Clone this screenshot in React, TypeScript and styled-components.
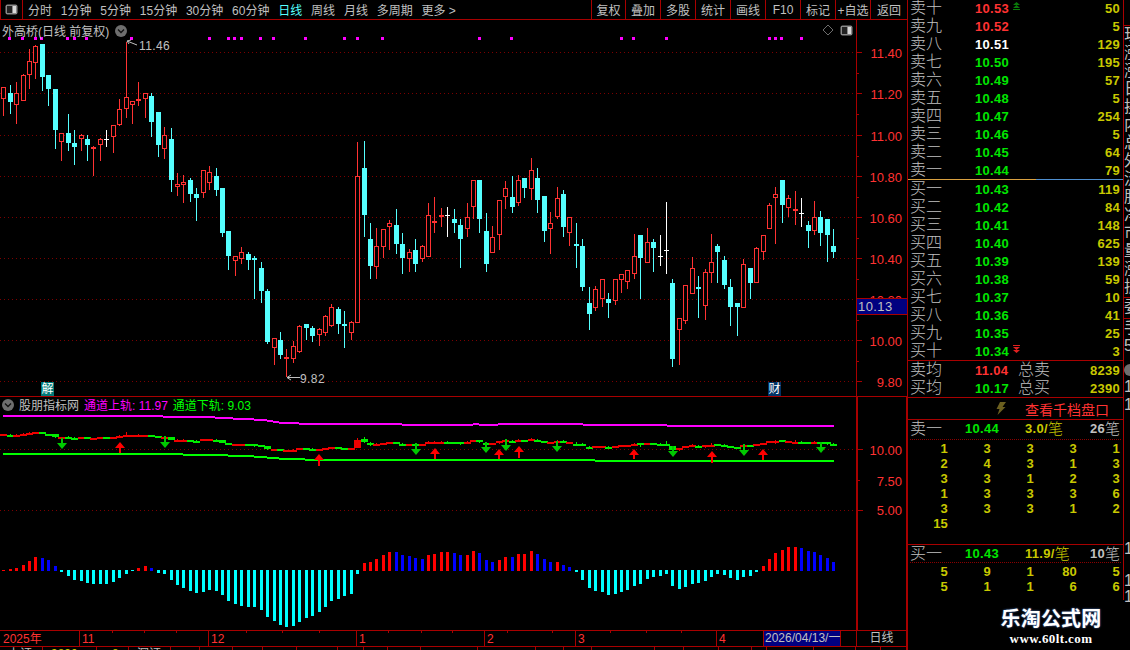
import React from 'react';
import styled, { createGlobalStyle } from 'styled-components';

const RED_LINE = '#a80000';
const GRID_DOT = '#7c0000';
const GRAY = '#c0c0c0';
const FONT = '"Liberation Sans", "Noto Sans CJK SC", sans-serif';

const GlobalStyle = createGlobalStyle`
  html, body {
    margin: 0;
    padding: 0;
    background: #000;
  }
`;

const Page = styled.div`
  display: flex;
  width: 1130px;
  height: 650px;
  overflow: hidden;
  background: #000;
  color: ${GRAY};
  font-family: ${FONT};
  font-size: 12px;
`;

const LeftPane = styled.div`
  display: flex;
  flex-direction: column;
  width: 907px;
  flex: none;
`;

/* toolbar */
const Toolbar = styled.div`
  display: flex;
  align-items: stretch;
  height: 19px;
  flex: none;
  border-bottom: 1px solid ${RED_LINE};
`;

const LayoutCell = styled.div`
  display: flex;
  align-items: center;
  justify-content: center;
  width: 23px;
  flex: none;
  border-left: 1px solid ${RED_LINE};
  border-right: 1px solid ${RED_LINE};
  box-sizing: border-box;
`;

const PeriodList = styled.div`
  display: flex;
  align-items: center;
  gap: 8.8px;
  padding-left: 5px;
  flex: 1;
`;

const Period = styled.span<{ $active?: boolean }>`
  color: ${p => (p.$active ? '#55ffff' : GRAY)};
  white-space: nowrap;
`;

const ToolButton = styled.div<{ $w: number }>`
  display: flex;
  align-items: center;
  justify-content: center;
  width: ${p => p.$w}px;
  flex: none;
  box-sizing: border-box;
  border-left: 1px solid ${RED_LINE};
  white-space: nowrap;
`;

/* chart rows */
const ChartRow = styled.div<{ $h: number }>`
  display: flex;
  height: ${p => p.$h}px;
  flex: none;
  border-bottom: 1px solid ${RED_LINE};
`;

const ChartArea = styled.div`
  position: relative;
  width: 856px;
  flex: none;
`;

const ChartSvg = styled.svg`
  display: block;
  width: 856px;
  height: 100%;
  font-family: ${FONT};
`;

const ChartTitle = styled.div`
  position: absolute;
  left: 2px;
  top: 2px;
  display: flex;
  align-items: center;
  gap: 6px;
  white-space: nowrap;
`;

const IndicatorTitle = styled.div`
  position: absolute;
  left: 2px;
  top: 0;
  height: 15px;
  display: flex;
  align-items: center;
  gap: 5px;
  white-space: nowrap;
`;

const Legend = styled.span<{ $color: string }>`
  color: ${p => p.$color};
`;

const Collapse = styled.span`
  display: inline-flex;
  align-items: center;
  justify-content: center;
  width: 12px;
  height: 12px;
  flex: none;
  border-radius: 50%;
  background: #6e6e6e;
`;

const CornerTools = styled.div`
  position: absolute;
  right: 3px;
  top: 4px;
  display: flex;
  align-items: center;
  gap: 6px;
`;

const EventBadge = styled.span<{ $left: number; $bg: string }>`
  position: absolute;
  left: ${p => p.$left}px;
  top: 362px;
  width: 13px;
  height: 14px;
  background: ${p => p.$bg};
  color: #fff;
  font-size: 12px;
  line-height: 14px;
  text-align: center;
`;

const AxisColumn = styled.div<{ $heavy?: boolean }>`
  position: relative;
  width: 51px;
  flex: none;
  box-sizing: border-box;
  border-left: ${p => (p.$heavy ? 2 : 1)}px solid ${RED_LINE};
  border-right: ${p => (p.$heavy ? 1 : 0)}px solid ${RED_LINE};
`;

const AxisSvg = styled.svg`
  display: block;
  width: 100%;
  height: 100%;
  font-family: ${FONT};
`;

const LastPriceTag = styled.div`
  position: absolute;
  left: 0;
  top: 278px;
  width: 100%;
  height: 17px;
  box-sizing: border-box;
  background: #000080;
  border-top: 1px solid ${RED_LINE};
  border-bottom: 1px solid ${RED_LINE};
  color: ${GRAY};
  font-size: 13px;
  line-height: 15px;
  letter-spacing: 0.4px;
  padding-left: 1px;
`;

/* date row */
const DateRow = styled.div`
  display: flex;
  height: 15px;
  flex: none;
  border-bottom: 1px solid ${RED_LINE};
`;

const DateTrack = styled.div`
  position: relative;
  width: 856px;
  flex: none;
`;

const YearMark = styled.span`
  position: absolute;
  left: 3px;
  top: 0;
  color: #ff3232;
  line-height: 16px;
  white-space: nowrap;
`;

const DateMark = styled.span<{ $left: number }>`
  position: absolute;
  left: ${p => p.$left}px;
  top: 0;
  height: 15px;
  padding-left: 2px;
  border-left: 1px solid ${RED_LINE};
  color: #ff3232;
  line-height: 16px;
  white-space: nowrap;
`;

const MinorTick = styled.i<{ $left: number }>`
  position: absolute;
  left: ${p => p.$left}px;
  top: 0;
  width: 1px;
  height: 2px;
  background: ${RED_LINE};
`;

const CursorDate = styled.span`
  position: absolute;
  left: 763px;
  top: 0;
  width: 78px;
  height: 15px;
  box-sizing: border-box;
  border-left: 1px solid ${RED_LINE};
  border-right: 1px solid ${RED_LINE};
  background: #000080;
  color: ${GRAY};
  line-height: 15px;
  padding-left: 1px;
  white-space: nowrap;
`;

const PeriodCell = styled.div`
  width: 51px;
  flex: none;
  box-sizing: border-box;
  border-left: 1px solid ${RED_LINE};
  border-right: 1px solid ${RED_LINE};
  text-align: center;
  line-height: 15px;
`;

/* status strip */
const StatusStrip = styled.div`
  display: flex;
  flex: 1;
  overflow: hidden;
`;

const StatusCell = styled.div<{ $w: number; $color?: string }>`
  width: ${p => p.$w}px;
  flex: none;
  box-sizing: border-box;
  border-right: 1px solid ${RED_LINE};
  color: ${p => p.$color ?? GRAY};
  line-height: 14px;
  padding-left: 8px;
  white-space: nowrap;
  overflow: hidden;
`;

/* order book */
const OrderPanel = styled.div`
  display: flex;
  flex-direction: column;
  width: 217px;
  flex: none;
  border-left: 1px solid ${RED_LINE};
  box-sizing: border-box;
`;

const BookBox = styled.div`
  height: 601px;
  flex: none;
  border-right: 1px solid ${RED_LINE};
  margin-top: -1px;
  display: flex;
  flex-direction: column;
`;

const LevelRow = styled.div`
  position: relative;
  display: flex;
  align-items: center;
  height: 18px;
  flex: none;
  padding: 0 3px 0 2px;
`;

const LevelName = styled.span`
  width: 65px;
  flex: none;
  font-size: 16px;
  line-height: 18px;
  color: ${GRAY};
  font-weight: 300;
`;

const Num = styled.span<{ $color: string; $w?: number; $right?: boolean }>`
  ${p => (p.$w ? `width: ${p.$w}px; flex: none;` : '')}
  ${p => (p.$right ? 'margin-left: auto; text-align: right;' : '')}
  color: ${p => p.$color};
  font-size: 13px;
  font-weight: 700;
  letter-spacing: 0.3px;
  white-space: nowrap;
`;

const Flag = styled.svg`
  position: absolute;
  left: 105px;
  top: 3px;
  width: 7px;
  height: 8px;
`;

const SpreadLine = styled.div`
  height: 1px;
  flex: none;
  background: linear-gradient(to right, #d8a040 0, #d8a040 128px, #4f8fd0 128px, #4f8fd0 100%);
`;

const Divider = styled.div`
  height: 1px;
  flex: none;
  background: ${RED_LINE};
`;

const DeepLink = styled.div`
  display: flex;
  align-items: center;
  height: 21px;
  flex: none;
  padding-left: 87px;
  gap: 19px;
  color: #ff3232;
  font-size: 14px;
`;

const QueueHead = styled.div`
  display: flex;
  align-items: center;
  height: 17px;
  flex: none;
  padding-left: 2px;
`;

const QueueName = styled(LevelName)`
  width: 55px;
`;

const Pen = styled.span<{ $color: string; $end?: boolean }>`
  color: ${p => p.$color};
  font-size: 15px;
  line-height: 17px;
  font-weight: 300;
  margin-right: ${p => (p.$end ? 3 : 0)}px;
`;

const QueueRule = styled.div<{ $top: number }>`
  height: 0;
  flex: none;
  margin: ${p => p.$top}px 2px 1px;
  border-top: 1px dotted #8a0000;
`;

const QueueGrid = styled.div<{ $h: number }>`
  display: grid;
  grid-template-columns: repeat(5, 43px);
  grid-auto-rows: 15px;
  height: ${p => p.$h}px;
  flex: none;
  margin-left: -3px;
  align-items: center;
`;

const QueueCell = styled.span`
  text-align: right;
  color: #c8c800;
  font-size: 13px;
  font-weight: 700;
  line-height: 15px;
  letter-spacing: 0.2px;
`;

const Watermark = styled.div`
  flex: 1;
  display: flex;
  flex-direction: column;
  align-items: center;
  padding: 8px 0 0 70px;
`;

const WatermarkTitle = styled.span`
  color: #fff;
  font-size: 20px;
  font-weight: 700;
  line-height: 22px;
  letter-spacing: 0.2px;
  white-space: nowrap;
  text-shadow: 0 0 2px #4f7fd0;
`;

const WatermarkUrl = styled.span`
  color: #fff;
  font-family: "Liberation Serif", serif;
  font-size: 13px;
  font-weight: 700;
  line-height: 16px;
  letter-spacing: 0.4px;
  white-space: nowrap;
  margin-top: 1px;
`;

/* clipped neighbour panel */
const SideStrip = styled.div`
  width: 6px;
  flex: none;
  overflow: hidden;
  display: flex;
  flex-direction: column;
  padding-top: 25px;
  box-sizing: border-box;
`;

const SideRow = styled.div<{ $rule?: boolean; $top?: number }>`
  width: 30px;
  height: 18px;
  flex: none;
  font-size: 16px;
  line-height: 18px;
  color: ${GRAY};
  margin-top: ${p => p.$top ?? 0}px;
  ${p => (p.$rule ? `border-top: 1px solid ${RED_LINE};` : '')}
`;

const SideDot = styled.span`
  display: block;
  width: 12px;
  height: 12px;
  margin-top: 9px;
  flex: none;
  border-radius: 50%;
  background: #6e6e6e;
`;

/* data, all y values in page pixels: [kind, bodyTop, bodyBottom, high, low] */
type Kind = 'r' | 'c' | 'w';
type Candle = [Kind, number, number, number, number];

const candles: Candle[] = [
  ['r', 87, 99, 87, 116], ['c', 93, 102, 85, 114], ['r', 93, 105, 82, 124], ['r', 75, 101, 74, 101],
  ['r', 61, 75, 49, 89], ['r', 46, 63, 45, 79], ['c', 44, 77, 44, 91], ['c', 75, 89, 75, 106],
  ['c', 89, 130, 89, 149], ['r', 133, 142, 133, 161], ['c', 133, 143, 114, 151], ['c', 143, 147, 130, 165],
  ['r', 135, 139, 134, 151], ['c', 139, 145, 135, 161], ['r', 147, 149, 146, 176], ['r', 139, 145, 138, 161],
  ['w', 139, 139, 130, 147], ['r', 125, 137, 125, 153], ['r', 109, 125, 99, 126], ['r', 97, 109, 42, 118],
  ['r', 101, 105, 101, 124], ['r', 99, 101, 82, 106], ['r', 93, 99, 93, 118], ['c', 96, 122, 93, 137],
  ['c', 112, 145, 112, 157], ['r', 135, 149, 127, 159], ['c', 139, 180, 128, 192], ['r', 184, 187, 173, 196],
  ['r', 182, 185, 175, 203], ['c', 180, 194, 178, 202], ['c', 194, 198, 188, 221], ['r', 170, 193, 170, 198],
  ['r', 172, 183, 166, 190], ['c', 176, 190, 168, 196], ['c', 188, 233, 188, 237], ['c', 231, 256, 231, 270],
  ['r', 256, 261, 256, 276], ['r', 252, 259, 247, 264], ['c', 254, 260, 252, 270], ['c', 258, 260, 256, 299],
  ['c', 268, 291, 262, 303], ['c', 291, 342, 289, 344], ['r', 338, 348, 338, 365], ['c', 340, 355, 332, 359],
  ['r', 357, 359, 349, 377], ['r', 346, 359, 341, 363], ['r', 326, 352, 325, 353], ['c', 324, 328, 324, 340],
  ['c', 328, 336, 326, 342], ['r', 329, 335, 328, 346], ['r', 316, 333, 315, 336], ['r', 307, 326, 304, 327],
  ['c', 309, 324, 307, 334], ['c', 324, 326, 311, 348], ['r', 322, 333, 321, 340], ['r', 176, 323, 142, 323],
  ['c', 168, 215, 141, 237], ['c', 239, 266, 223, 279], ['r', 246, 267, 228, 279], ['r', 229, 247, 229, 258],
  ['r', 223, 227, 220, 250], ['c', 225, 244, 209, 254], ['c', 244, 258, 233, 274], ['r', 252, 259, 249, 272],
  ['c', 250, 264, 239, 272], ['r', 246, 259, 245, 262], ['r', 215, 257, 203, 257], ['r', 221, 223, 197, 233],
  ['r', 215, 217, 208, 227], ['w', 215, 215, 207, 237], ['c', 219, 223, 209, 233], ['c', 225, 239, 219, 268],
  ['r', 217, 229, 203, 237], ['r', 180, 207, 180, 219], ['c', 180, 219, 180, 233], ['c', 231, 264, 213, 272],
  ['r', 237, 253, 226, 253], ['r', 200, 235, 200, 250], ['r', 188, 197, 181, 209], ['c', 197, 207, 176, 213],
  ['r', 180, 203, 175, 206], ['c', 178, 188, 178, 198], ['r', 170, 189, 158, 200], ['c', 178, 200, 168, 213],
  ['c', 196, 231, 196, 242], ['r', 223, 229, 212, 254], ['r', 198, 217, 187, 219], ['c', 194, 227, 190, 237],
  ['r', 217, 233, 217, 246], ['c', 244, 246, 223, 268], ['c', 246, 287, 239, 291], ['c', 303, 314, 287, 330],
  ['r', 289, 308, 286, 311], ['r', 279, 299, 279, 307], ['c', 299, 303, 293, 318], ['r', 279, 301, 279, 305],
  ['r', 274, 280, 274, 293], ['r', 270, 282, 270, 289], ['r', 256, 274, 234, 279], ['c', 235, 258, 235, 299],
  ['r', 242, 263, 228, 263], ['c', 242, 248, 239, 272], ['w', 256, 256, 235, 266], ['w', 250, 250, 202, 274],
  ['c', 283, 359, 279, 367], ['r', 318, 330, 318, 365], ['r', 285, 321, 285, 324], ['r', 268, 294, 257, 294],
  ['c', 287, 289, 276, 318], ['r', 272, 306, 269, 320], ['r', 262, 273, 234, 283], ['c', 246, 252, 244, 283],
  ['c', 260, 285, 256, 289], ['c', 287, 307, 279, 326], ['c', 303, 307, 303, 336], ['r', 264, 308, 259, 308],
  ['c', 268, 283, 268, 299], ['r', 248, 283, 247, 283], ['r', 235, 252, 235, 260], ['r', 205, 229, 203, 229],
  ['r', 194, 198, 187, 244], ['c', 180, 205, 180, 223], ['r', 198, 208, 195, 217], ['r', 209, 211, 191, 225],
  ['w', 213, 213, 198, 227], ['c', 225, 231, 221, 248], ['r', 217, 231, 201, 235], ['c', 217, 233, 211, 246],
  ['c', 219, 235, 219, 262], ['c', 246, 252, 229, 258],
];

const candleX = (i: number) => Math.round(3.3 + i * 6.434);
const miniY = (y: number) => 449.3 - (340.3 - y) * 0.0594;

const priceLevels = [52, 93, 135, 176, 217, 258, 299, 340, 381];
const priceLabels = ['11.40', '11.20', '11.00', '10.80', '10.60', '10.40', '10.20', '10.00', '9.80'];
const minorLevels = [73, 114, 156, 197, 238, 279, 320, 361];

const signalX = [8, 21, 34, 40, 66, 73, 85, 130, 208, 227, 233, 240, 259, 272, 304, 343, 356, 381, 478, 510, 620, 632, 665, 768, 774, 780, 800];

const upperSteps: [number, number, number][] = [
  [3, 163, 416], [163, 215, 417], [215, 233, 418], [233, 254, 419], [254, 267, 420], [267, 273, 421],
  [273, 279, 422], [279, 299, 423], [299, 402, 424], [402, 473, 425], [473, 479, 424], [479, 498, 425],
  [498, 583, 424], [583, 667, 425], [667, 834, 426],
];

const lowerSteps: [number, number, number][] = [
  [3, 183, 454], [183, 228, 455], [228, 254, 456], [254, 267, 457], [267, 279, 458], [279, 305, 459],
  [305, 595, 460], [595, 834, 461],
];

// [x, top, tip]
const downArrows = [
  [62, 438, 449], [165, 436, 448], [416, 443, 455], [486, 442, 453], [506, 439, 451], [557, 441, 452],
  [673, 446, 457], [744, 444, 456], [821, 442, 453],
];
// [x, tip, bottom]
const upArrows = [
  [120, 442, 453], [319, 454, 466], [435, 448, 459], [499, 449, 459], [519, 446, 458], [634, 449, 459],
  [712, 451, 463], [763, 449, 460],
];

// z values are 3x crop coordinates of bar ends
const macd: ['r' | 'b' | 'c', number][] = [
  ['r', 90], ['r', 87], ['r', 84], ['r', 75], ['r', 63], ['r', 51], ['b', 54], ['b', 60], ['b', 78], ['c', 95],
  ['c', 108], ['c', 120], ['c', 123], ['c', 129], ['c', 132], ['c', 132], ['c', 132], ['c', 126], ['c', 114], ['c', 102],
  ['c', 93], ['r', 84], ['r', 78], ['b', 84], ['c', 99], ['c', 102], ['c', 120], ['c', 135], ['c', 144], ['c', 153],
  ['c', 159], ['c', 156], ['c', 150], ['c', 153], ['c', 165], ['c', 183], ['c', 192], ['c', 198], ['c', 201], ['c', 201],
  ['c', 210], ['c', 231], ['c', 243], ['c', 255], ['c', 261], ['c', 258], ['c', 246], ['c', 234], ['c', 228], ['c', 216],
  ['c', 201], ['c', 183], ['c', 177], ['c', 168], ['c', 162], ['c', 102], ['r', 69], ['r', 66], ['r', 57], ['r', 45],
  ['r', 36], ['b', 36], ['b', 45], ['b', 48], ['b', 54], ['b', 57], ['r', 45], ['r', 42], ['r', 36], ['r', 36],
  ['b', 39], ['b', 45], ['r', 45], ['r', 33], ['b', 39], ['b', 60], ['b', 66], ['r', 60], ['r', 51], ['b', 51],
  ['r', 42], ['r', 42], ['r', 33], ['b', 42], ['b', 57], ['b', 66], ['r', 66], ['b', 75], ['b', 81], ['c', 95],
  ['c', 120], ['c', 144], ['c', 153], ['c', 156], ['c', 165], ['c', 162], ['c', 156], ['c', 150], ['c', 138], ['c', 132],
  ['c', 117], ['c', 111], ['c', 108], ['c', 102], ['c', 138], ['c', 147], ['c', 141], ['c', 132], ['c', 129], ['c', 123],
  ['c', 111], ['c', 102], ['c', 105], ['c', 114], ['c', 120], ['c', 111], ['c', 108], ['c', 96], ['r', 78], ['r', 57],
  ['r', 39], ['r', 30], ['r', 21], ['r', 21], ['b', 24], ['b', 33], ['b', 36], ['b', 45], ['b', 54], ['b', 66],
];

const macdColors = { r: '#ff0000', b: '#0000ff', c: '#00ffff' };

const periods = ['分时', '1分钟', '5分钟', '15分钟', '30分钟', '60分钟', '日线', '周线', '月线', '多周期', '更多 >'];
const tools: [string, number][] = [
  ['复权', 34], ['叠加', 35], ['多股', 35], ['统计', 35], ['画线', 35], ['F10', 35], ['标记', 35], ['+自选', 35], ['返回', 37],
];

const asks: [string, string, string, string][] = [
  ['卖十', '10.53', '#ff3232', '50'], ['卖九', '10.52', '#ff3232', '5'], ['卖八', '10.51', '#ffffff', '129'],
  ['卖七', '10.50', '#00e600', '195'], ['卖六', '10.49', '#00e600', '57'], ['卖五', '10.48', '#00e600', '5'],
  ['卖四', '10.47', '#00e600', '254'], ['卖三', '10.46', '#00e600', '5'], ['卖二', '10.45', '#00e600', '64'],
  ['卖一', '10.44', '#00e600', '79'],
];
const bids: [string, string, string, string][] = [
  ['买一', '10.43', '#00e600', '119'], ['买二', '10.42', '#00e600', '84'], ['买三', '10.41', '#00e600', '148'],
  ['买四', '10.40', '#00e600', '625'], ['买五', '10.39', '#00e600', '139'], ['买六', '10.38', '#00e600', '59'],
  ['买七', '10.37', '#00e600', '10'], ['买八', '10.36', '#00e600', '41'], ['买九', '10.35', '#00e600', '25'],
  ['买十', '10.34', '#00e600', '3'],
];

const askQueue = ['1', '3', '3', '3', '1', '2', '4', '3', '1', '3', '3', '3', '1', '2', '3', '1', '3', '3', '3', '6', '3', '3', '3', '1', '2', '15'];
const bidQueue = ['5', '9', '1', '80', '5', '5', '1', '1', '6', '6'];

const sideChars = ['现', '涨', '涨', '日', '换', '内', '总', '外', '流', '股', '净', '市', '量', '涨', '振'];

const statusCells: [number, string, string?][] = [
  [43, '上证'], [54, '3890', '#c8c800'], [32, '+8', '#c8c800'], [42, '深证'], [29, ''], [33, ''], [30, ''], [34, ''],
  [41, ''], [26, ''], [24, ''], [33, ''], [57, ''], [58, ''], [28, ''], [28, ''], [63, ''], [29, ''], [35, ''], [33, ''],
  [15, ''], [47, ''], [42, ''], [25, ''], [26, ''],
];

const ChevronDown = () => (
  <svg width="8" height="6" viewBox="0 0 8 6">
    <path d="M1 1.5 L4 4.5 L7 1.5" fill="none" stroke="#111" strokeWidth="1.3" />
  </svg>
);

const PaneToggle = () => (
  <svg width="13" height="11" viewBox="0 0 13 11">
    <rect x="0.5" y="0.5" width="12" height="10" rx="2" fill="#8a8a8a" />
    <rect x="2" y="2" width="5" height="7" fill="#222" />
    <rect x="8" y="2" width="3" height="7" fill="#d8d8d8" />
  </svg>
);

const CandleMark = ({ c, i }: { c: Candle; i: number }) => {
  const [kind, top, bottom, high, low] = c;
  const x = candleX(i);
  if (kind === 'w') {
    return (
      <g stroke="#fff" shapeRendering="crispEdges">
        <line x1={x + 0.5} x2={x + 0.5} y1={high} y2={low} />
        <line x1={x - 2} x2={x + 3} y1={top + 0.5} y2={top + 0.5} />
      </g>
    );
  }
  if (kind === 'c') {
    return (
      <g shapeRendering="crispEdges">
        <line x1={x + 0.5} x2={x + 0.5} y1={high} y2={low} stroke="#55ffff" />
        <rect x={x - 2} y={top} width={5} height={Math.max(bottom - top, 2)} fill="#55ffff" />
      </g>
    );
  }
  return (
    <g shapeRendering="crispEdges" stroke="#ff3232">
      <line x1={x + 0.5} x2={x + 0.5} y1={high} y2={top} />
      <line x1={x + 0.5} x2={x + 0.5} y1={bottom} y2={low} />
      <rect x={x - 1.5} y={top + 0.5} width={4} height={Math.max(bottom - top - 1, 1)} fill="#000" />
    </g>
  );
};

const MiniCandle = ({ c, i }: { c: Candle; i: number }) => {
  const [kind, top, bottom, high, low] = c;
  const x = candleX(i);
  const color = kind === 'r' ? '#ee0000' : '#00ee00';
  const y = Math.round(miniY(top));
  const h = Math.max(Math.round(miniY(bottom)) - y, 2);
  return (
    <g shapeRendering="crispEdges">
      <line x1={x + 0.5} x2={x + 0.5} y1={Math.round(miniY(high))} y2={Math.round(miniY(low))} stroke={color} />
      <rect x={x - 3} y={y} width={7} height={h} fill={color} />
    </g>
  );
};

const StepLine = ({ steps, color }: { steps: [number, number, number][]; color: string }) => (
  <g shapeRendering="crispEdges">
    {steps.map(([a, b, y]) => (
      <rect key={a} x={a} y={y - 1} width={b - a} height={2} fill={color} />
    ))}
  </g>
);

const MainChart = () => (
  <ChartSvg viewBox="0 20 856 376">
    {priceLevels.map(y => (
      <line key={y} x1="0" x2="856" y1={y + 0.5} y2={y + 0.5} stroke={GRID_DOT} strokeDasharray="1 3" shapeRendering="crispEdges" />
    ))}
    {signalX.map(x => (
      <rect key={x} x={x} y={37} width={3} height={3} fill="#ff00ff" />
    ))}
    {candles.map((c, i) => (
      <CandleMark key={i} c={c} i={i} />
    ))}
    <g stroke="#c0c0c0" fill="none" strokeWidth="1">
      <path d="M137 45 L127 41 M127 41 L131 40 M127 41 L129 44" />
      <path d="M287 377.5 L300 377.5 M287 377.5 L291 375 M287 377.5 L291 380" />
    </g>
    <text x="139" y="50" fontSize="12" fill="#c0c0c0" letterSpacing="0.4">11.46</text>
    <text x="300" y="383" fontSize="12" fill="#c0c0c0" letterSpacing="0.4">9.82</text>
  </ChartSvg>
);

const IndicatorChart = () => (
  <ChartSvg viewBox="0 397 856 233">
    {[449, 510].map(y => (
      <line key={y} x1="0" x2="856" y1={y + 0.5} y2={y + 0.5} stroke={GRID_DOT} strokeDasharray="1 3" shapeRendering="crispEdges" />
    ))}
    <StepLine steps={upperSteps} color="#ff00ff" />
    <StepLine steps={lowerSteps} color="#00ff00" />
    {candles.map((c, i) => (
      <MiniCandle key={i} c={c} i={i} />
    ))}
    {downArrows.map(([x, top, tip]) => (
      <path key={x} d={`M${x - 1} ${top} h2 v${tip - top - 6} h4 L${x} ${tip} L${x - 5} ${tip - 6} h4 z`} fill="#00c800" />
    ))}
    {upArrows.map(([x, tip, bottom]) => (
      <path key={x} d={`M${x} ${tip} L${x + 5} ${tip + 6} h-4 V${bottom} h-2 V${tip + 6} h-4 z`} fill="#ff0000" />
    ))}
    <g shapeRendering="crispEdges">
      {macd.map(([k, z], i) => {
        const end = Math.round(540 + z / 3);
        const x = candleX(i) - 1;
        return k === 'c' ? (
          <rect key={i} x={x} y={570} width={3} height={end - 570} fill={macdColors.c} />
        ) : (
          <rect key={i} x={x} y={end} width={3} height={571 - end} fill={macdColors[k]} />
        );
      })}
    </g>
  </ChartSvg>
);

const PriceAxis = () => (
  <AxisSvg viewBox="0 20 50 376">
    <g stroke={RED_LINE} shapeRendering="crispEdges">
      {priceLevels.map(y => (
        <line key={y} x1="0" x2="5" y1={y + 0.5} y2={y + 0.5} />
      ))}
      {minorLevels.map(y => (
        <line key={y} x1="0" x2="2" y1={y + 0.5} y2={y + 0.5} />
      ))}
    </g>
    {priceLabels.map((t, i) => (
      <text key={t} x="45" y={priceLevels[i] + 5.5} textAnchor="end" fontSize="13" fill="#ff3232">{t}</text>
    ))}
  </AxisSvg>
);

const IndicatorAxis = () => (
  <AxisSvg viewBox="0 397 48 233">
    <g stroke={RED_LINE} shapeRendering="crispEdges">
      <line x1="0" x2="5" y1="449.5" y2="449.5" />
      <line x1="0" x2="2" y1="480.5" y2="480.5" />
      <line x1="0" x2="5" y1="510.5" y2="510.5" />
    </g>
    <g textAnchor="end" fontSize="13" fill="#ff3232">
      <text x="44" y="455">10.00</text>
      <text x="44" y="486">7.50</text>
      <text x="44" y="515">5.00</text>
    </g>
  </AxisSvg>
);

const LevelRows = ({ rows }: { rows: [string, string, string, string][] }) => (
  <>
    {rows.map(([name, price, color, qty]) => (
      <LevelRow key={name}>
        <LevelName>{name}</LevelName>
        <Num $color={color}>{price}</Num>
        <Num $color="#c8c800" $right>{qty}</Num>
        {name === '卖十' && (
          <Flag viewBox="0 0 7 8">
            <path d="M3.5 0 L7 3 H0 Z M3.5 3 L7 6 H0 Z M0 7 H7 V8 H0 Z" fill="#0a7a0a" />
          </Flag>
        )}
        {name === '买十' && (
          <Flag viewBox="0 0 7 8">
            <path d="M0 0 H7 V1 H0 Z M0 2 H7 L3.5 5 Z M0 5 H7 L3.5 8 Z" fill="#e02020" />
          </Flag>
        )}
      </LevelRow>
    ))}
  </>
);

const QueueHeader = ({ name, price, perOrder, orders }: { name: string; price: string; perOrder: string; orders: string }) => (
  <QueueHead>
    <QueueName>{name}</QueueName>
    <Num $color="#00e600" $w={60}>{price}</Num>
    <Num $color="#c8c800">{perOrder}</Num>
    <Pen $color="#c8c800">笔</Pen>
    <Num $color={GRAY} $right>{orders}</Num>
    <Pen $color={GRAY} $end>笔</Pen>
  </QueueHead>
);

export default function App() {
  return (
    <>
      <GlobalStyle />
      <Page>
        <LeftPane>
          <Toolbar>
            <LayoutCell>
              <PaneToggle />
            </LayoutCell>
            <PeriodList>
              {periods.map(p => (
                <Period key={p} $active={p === '日线'}>{p}</Period>
              ))}
            </PeriodList>
            {tools.map(([t, w]) => (
              <ToolButton key={t} $w={w}>{t}</ToolButton>
            ))}
          </Toolbar>

          <ChartRow $h={376}>
            <ChartArea>
              <MainChart />
              <ChartTitle>
                <span>外高桥(日线 前复权)</span>
                <Collapse>
                  <ChevronDown />
                </Collapse>
              </ChartTitle>
              <CornerTools>
                <svg width="12" height="12" viewBox="0 0 12 12">
                  <path d="M6 1 L11 6 L6 11 L1 6 Z" fill="none" stroke="#6e6e6e" />
                </svg>
                <PaneToggle />
              </CornerTools>
              <EventBadge $left={41} $bg="#007878">解</EventBadge>
              <EventBadge $left={768} $bg="#003366">财</EventBadge>
            </ChartArea>
            <AxisColumn>
              <PriceAxis />
              <LastPriceTag>10.13</LastPriceTag>
            </AxisColumn>
          </ChartRow>

          <ChartRow $h={233}>
            <ChartArea>
              <IndicatorChart />
              <IndicatorTitle>
                <Collapse>
                  <ChevronDown />
                </Collapse>
                <span>股朋指标网</span>
                <Legend $color="#ff00ff">通道上轨: 11.97</Legend>
                <Legend $color="#00ff00">通道下轨: 9.03</Legend>
              </IndicatorTitle>
            </ChartArea>
            <AxisColumn $heavy>
              <IndicatorAxis />
            </AxisColumn>
          </ChartRow>

          <DateRow>
            <DateTrack>
              <YearMark>2025年</YearMark>
              <DateMark $left={79}>11</DateMark>
              <DateMark $left={208}>12</DateMark>
              <DateMark $left={356}>1</DateMark>
              <DateMark $left={484}>2</DateMark>
              <DateMark $left={575}>3</DateMark>
              <DateMark $left={716}>4</DateMark>
              {[112, 144, 176, 246, 282, 319, 388, 421, 452, 507, 552, 610, 646, 681].map(x => (
                <MinorTick key={x} $left={x} />
              ))}
              <CursorDate>2026/04/13/一</CursorDate>
            </DateTrack>
            <PeriodCell>日线</PeriodCell>
          </DateRow>

          <StatusStrip>
            {statusCells.map(([w, t, c], i) => (
              <StatusCell key={i} $w={w} $color={c}>{t}</StatusCell>
            ))}
          </StatusStrip>
        </LeftPane>

        <OrderPanel>
          <BookBox>
            <LevelRows rows={asks} />
            <SpreadLine />
            <LevelRows rows={bids} />
            <Divider />
            <LevelRow>
              <LevelName>卖均</LevelName>
              <Num $color="#ff3232" $w={43}>11.04</Num>
              <LevelName>总卖</LevelName>
              <Num $color="#c8c800" $right>8239</Num>
            </LevelRow>
            <LevelRow>
              <LevelName>买均</LevelName>
              <Num $color="#00e600" $w={43}>10.17</Num>
              <LevelName>总买</LevelName>
              <Num $color="#c8c800" $right>2390</Num>
            </LevelRow>
            <Divider />
            <DeepLink>
              <svg width="11" height="13" viewBox="0 0 11 13">
                <path d="M5 0 H11 L7.5 5 H10.5 L2.5 13 L4.5 7 H1.5 Z" fill="#6b5f1f" />
              </svg>
              <span>查看千档盘口</span>
            </DeepLink>
            <Divider />
            <QueueHeader name="卖一" price="10.44" perOrder="3.0/" orders="26" />
            <QueueRule $top={2} />
            <QueueGrid $h={103}>
              {askQueue.map((q, i) => (
                <QueueCell key={i}>{q}</QueueCell>
              ))}
            </QueueGrid>
            <Divider />
            <QueueHeader name="买一" price="10.43" perOrder="11.9/" orders="10" />
            <QueueRule $top={0} />
            <QueueGrid $h={30}>
              {bidQueue.map((q, i) => (
                <QueueCell key={i}>{q}</QueueCell>
              ))}
            </QueueGrid>
          </BookBox>
          <Watermark>
            <WatermarkTitle>乐淘公式网</WatermarkTitle>
            <WatermarkUrl>www.60lt.com</WatermarkUrl>
          </Watermark>
        </OrderPanel>

        <SideStrip>
          {sideChars.map((c, i) => (
            <SideRow key={i} $rule={i === 0}>{c}</SideRow>
          ))}
          <SideRow $rule $top={1}>委</SideRow>
          <SideRow $rule $top={2}>手</SideRow>
          <SideRow>5</SideRow>
          <SideDot />
          <SideRow $top={2}>1</SideRow>
          <SideRow>1</SideRow>
          <SideRow $top={126}>1</SideRow>
          <SideRow $top={14}>1</SideRow>
          <SideRow $top={-2}>1</SideRow>
        </SideStrip>
      </Page>
    </>
  );
}
